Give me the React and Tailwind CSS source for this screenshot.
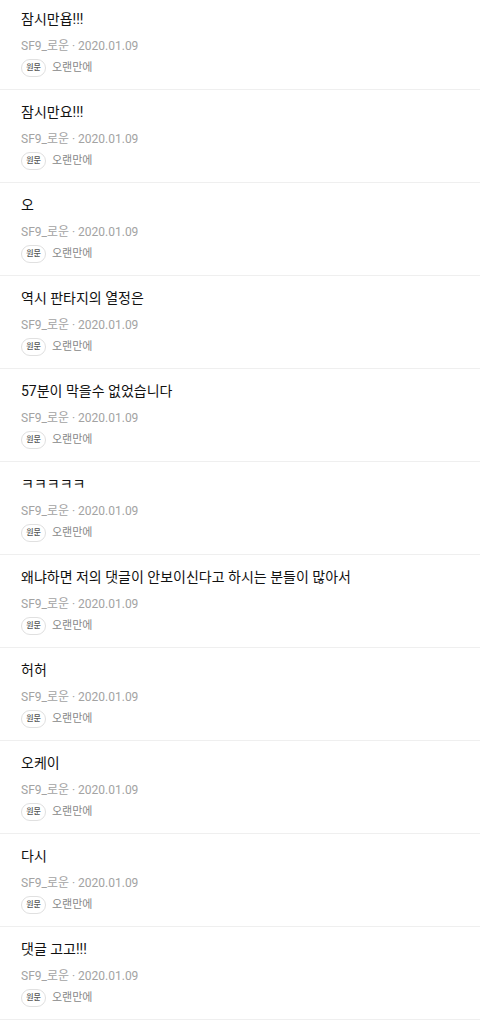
const comments = [
  "잠시만욥!!!",
  "잠시만요!!!",
  "오",
  "역시 판타지의 열정은",
  "57분이 막을수 없었습니다",
  "ㅋㅋㅋㅋㅋ",
  "왜냐하면 저의 댓글이 안보이신다고 하시는 분들이 많아서",
  "허허",
  "오케이",
  "다시",
  "댓글 고고!!!",
];

function CommentItem({ text }) {
  return (
    <li className="h-[93px] border-b border-[#efefef] px-[21px] pt-[12px]">
      <p className="text-[14px] leading-[20px] text-[#111]">{text}</p>
      <p className="mt-[9px] text-[12px] leading-[16px] text-[#a3a3a3]">
        SF9_로운 · 2020.01.09
      </p>
      <div className="mt-[5px] flex items-center gap-[6px]">
        <span className="flex h-[18px] w-[25px] items-center justify-center rounded-full border border-[#e0e0e0] text-[8px] font-medium text-[#555]">
          원문
        </span>
        <span className="text-[11px] leading-[18px] text-[#888]">오랜만에</span>
      </div>
    </li>
  );
}

export default function App() {
  return (
    <div
      className="h-[1023px] overflow-hidden bg-white"
      style={{ fontFamily: 'Roboto, "Noto Sans CJK KR", sans-serif' }}
    >
      <ul className="-mt-[3px]">
        {comments.map((c, i) => (
          <CommentItem key={i} text={c} />
        ))}
      </ul>
    </div>
  );
}
